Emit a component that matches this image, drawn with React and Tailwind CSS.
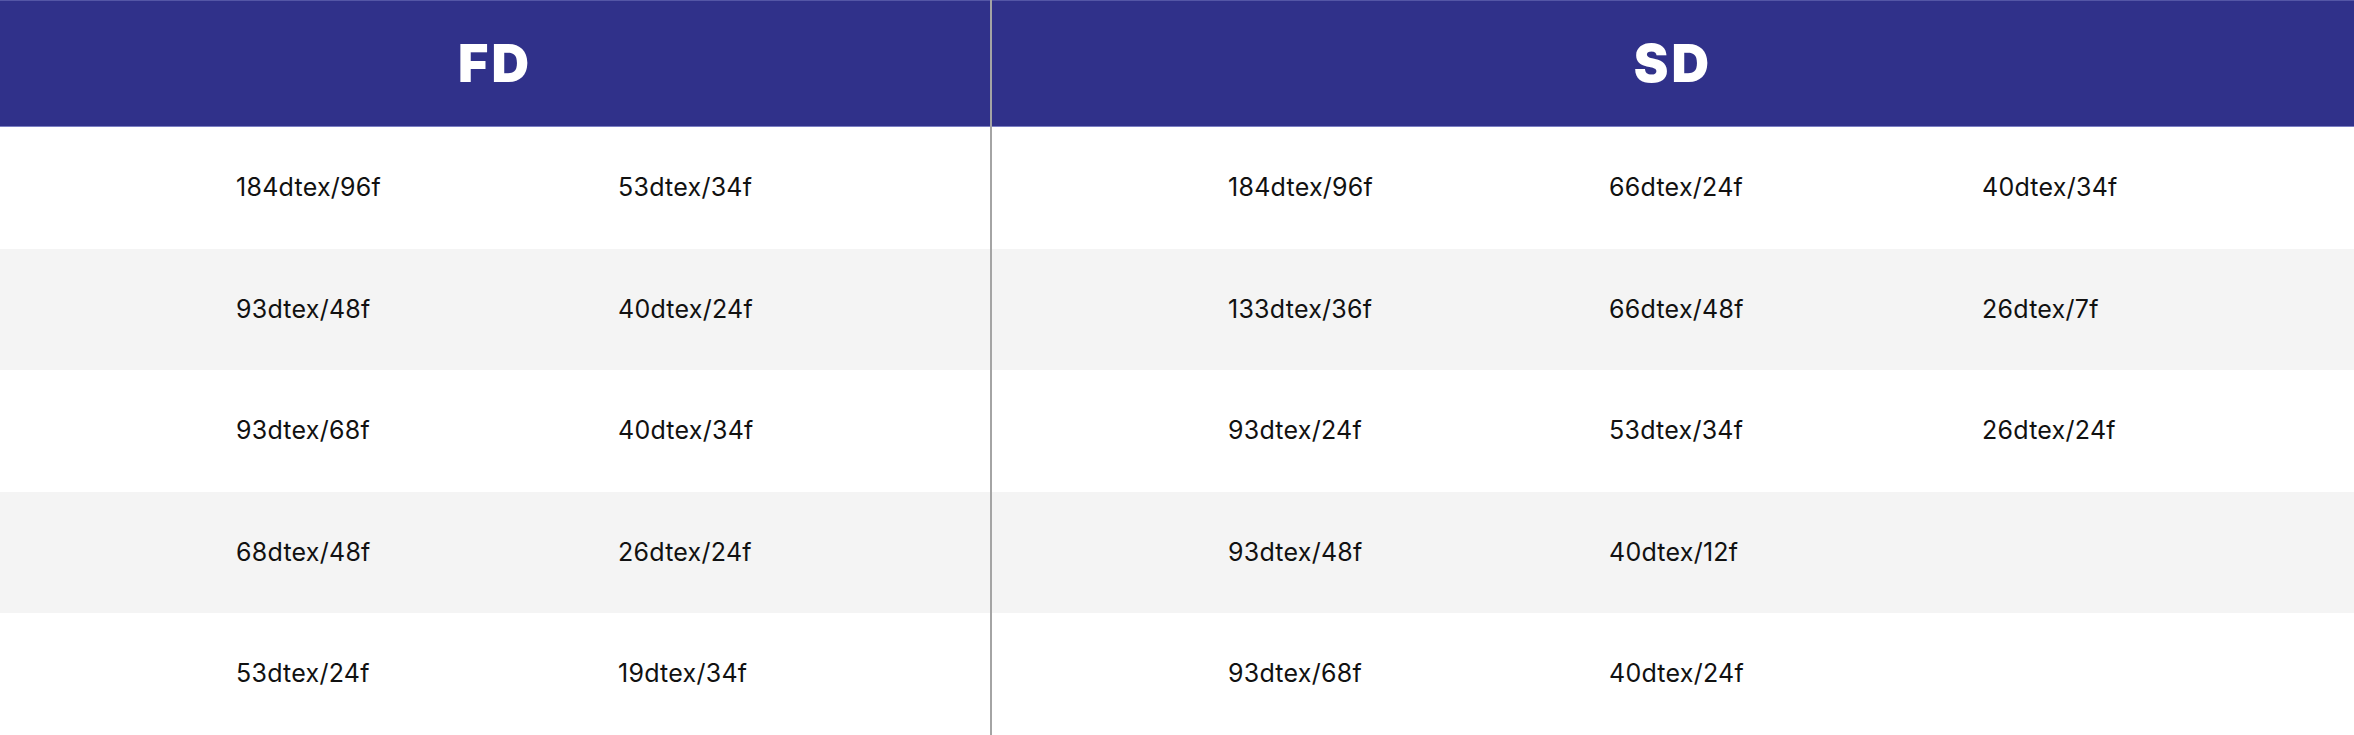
const fd = [
  ["184dtex/96f", "53dtex/34f"],
  ["93dtex/48f", "40dtex/24f"],
  ["93dtex/68f", "40dtex/34f"],
  ["68dtex/48f", "26dtex/24f"],
  ["53dtex/24f", "19dtex/34f"],
];

const sd = [
  ["184dtex/96f", "66dtex/24f", "40dtex/34f"],
  ["133dtex/36f", "66dtex/48f", "26dtex/7f"],
  ["93dtex/24f", "53dtex/34f", "26dtex/24f"],
  ["93dtex/48f", "40dtex/12f", ""],
  ["93dtex/68f", "40dtex/24f", ""],
];

const Section = ({ title, rows, widths, className }) => (
  <div className={`flex flex-col h-full ${className}`}>
    <div className="h-[127px] shrink-0 bg-[#30318a] border-t border-t-[#5456a6] border-b border-b-[#7a7ec2] flex items-center justify-center">
      <span className="text-white text-[52px] font-black tracking-[0.06em] leading-none font-['Inter',sans-serif]">
        {title}
      </span>
    </div>
    {rows.map((row, i) => (
      <div
        key={i}
        className={`flex-1 flex items-center pl-[236px] ${i % 2 === 1 ? "bg-[#f4f4f4]" : "bg-white"}`}
      >
        {row.map((cell, j) => (
          <div
            key={j}
            style={{ width: widths[j] }}
            className="shrink-0 text-[25px] tracking-[0.01em] text-[#111] font-['Inter',sans-serif]"
          >
            {cell}
          </div>
        ))}
      </div>
    ))}
  </div>
);

export default function App() {
  return (
    <div className="w-[2354px] h-[735px] flex bg-white overflow-hidden">
      <Section
        title="FD"
        rows={fd}
        widths={[382, 382]}
        className="w-[992px] shrink-0 border-r-2 border-r-[#a4a4a4]"
      />
      <Section title="SD" rows={sd} widths={[381, 373, 300]} className="flex-1" />
    </div>
  );
}
